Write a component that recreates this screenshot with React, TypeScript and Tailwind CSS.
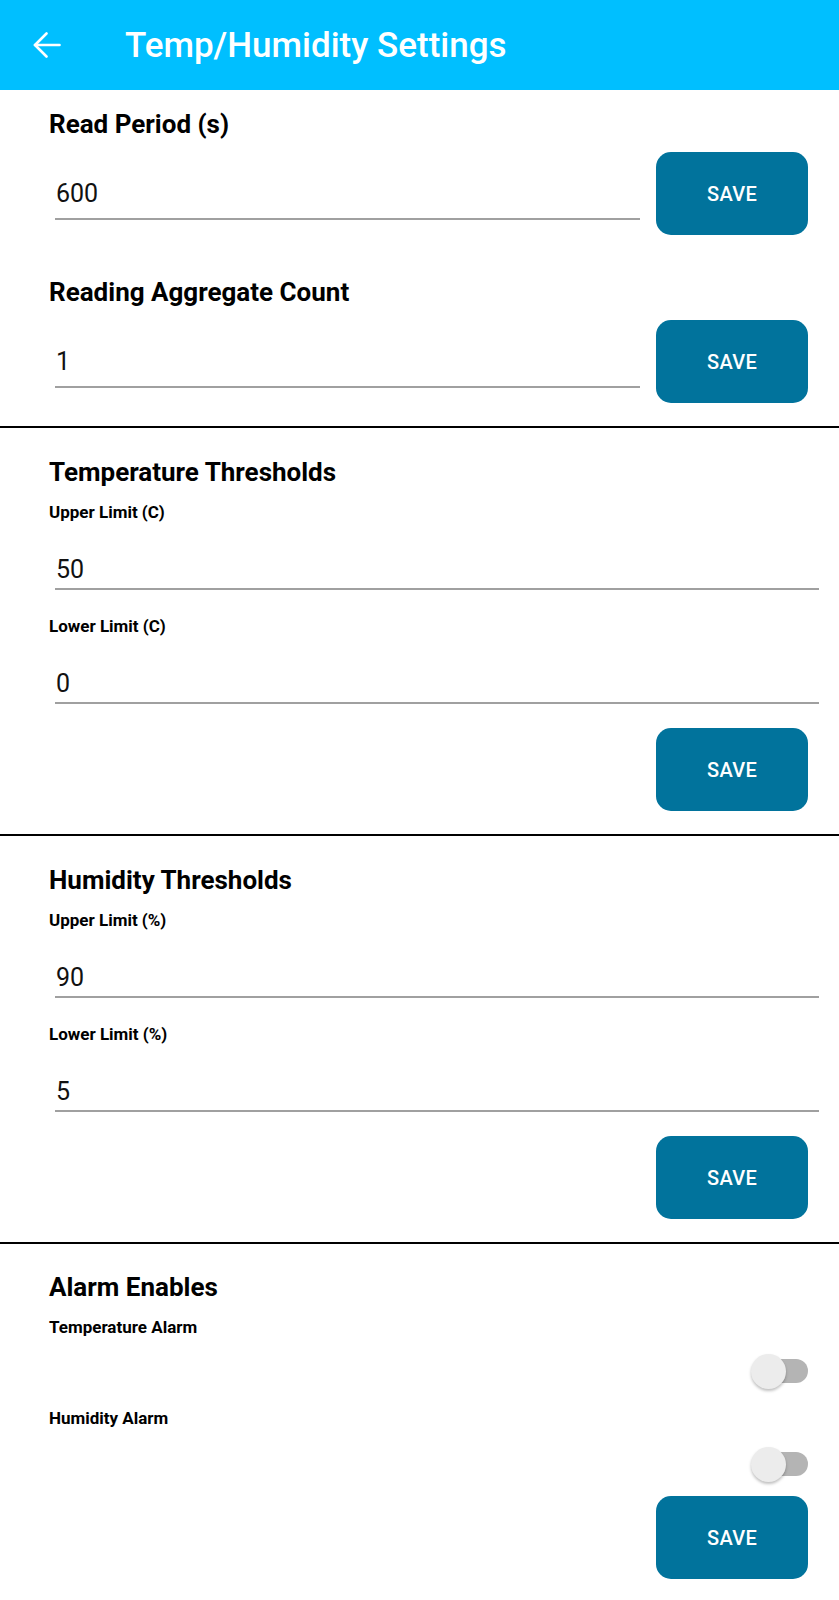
const font = "font-['Roboto','Liberation_Sans',sans-serif]";

function SaveButton({ className = "" }: { className?: string }) {
  return (
    <button
      className={`w-[152px] h-[83px] rounded-[15px] bg-[#01739c] text-white text-[20px] font-medium tracking-[0.3px] ${className}`}
    >
      SAVE
    </button>
  );
}

function Heading({ children, className = "" }: { children: string; className?: string }) {
  return (
    <h2 className={`pl-[49px] text-[26px] leading-[28px] font-bold text-black ${className}`}>{children}</h2>
  );
}

function Label({ children, className = "" }: { children: string; className?: string }) {
  return (
    <div className={`pl-[49px] text-[17px] leading-[18px] font-bold text-black ${className}`}>{children}</div>
  );
}

function Field({ value, className = "" }: { value: string; className?: string }) {
  return (
    <div className={`ml-[55px] mr-[20px] border-b-2 border-[#a0a0a0] pl-[1px] pb-[4px] text-[25px] leading-[28px] text-[#111] ${className}`}>
      {value}
    </div>
  );
}

function Toggle({ className = "" }: { className?: string }) {
  return (
    <div className={`flex justify-end pr-[31px] ${className}`}>
      <div className="relative w-[57px] h-[35px]">
        <div className="absolute right-0 top-[5px] w-[44px] h-[24px] rounded-full bg-[#b4b4b4]" />
        <div className="absolute left-0 top-0 w-[35px] h-[35px] rounded-full bg-[#ececec] shadow-[0_2px_3px_rgba(0,0,0,0.25)]" />
      </div>
    </div>
  );
}

function Divider() {
  return <div className="h-[2px] bg-black" />;
}

function SettingRow({ title, value, className = "" }: { title: string; value: string; className?: string }) {
  return (
    <div className={className}>
      <Heading>{title}</Heading>
      <div className="mt-[14px] flex items-center gap-[16px] pl-[55px] pr-[31px]">
        <div className="flex-1 h-[53px] flex items-center border-b-2 border-[#a0a0a0] pl-[1px] pt-[2px] text-[25px] leading-[28px] text-[#111]">
          {value}
        </div>
        <SaveButton />
      </div>
    </div>
  );
}

function Thresholds({ title, unit, upper, lower }: { title: string; unit: string; upper: string; lower: string }) {
  return (
    <div className="pb-[23px]">
      <Heading className="mt-[30px]">{title}</Heading>
      <Label className="mt-[17px]">{`Upper Limit (${unit})`}</Label>
      <Field className="mt-[35px]" value={upper} />
      <Label className="mt-[27px]">{`Lower Limit (${unit})`}</Label>
      <Field className="mt-[35px]" value={lower} />
      <div className="mt-[24px] flex justify-end pr-[31px]">
        <SaveButton />
      </div>
    </div>
  );
}

export default function App() {
  return (
    <div className={`w-[839px] min-h-[1600px] bg-white ${font}`}>
      <header className="h-[90px] bg-[#00bfff] flex items-center">
        <svg className="ml-[33px]" width="28" height="26" viewBox="0 0 28 26" fill="none" stroke="white" strokeWidth="2.6" strokeLinecap="round" strokeLinejoin="round">
          <path d="M26.5 13H2" />
          <path d="M13.5 1.5L2 13l11.5 11.5" />
        </svg>
        <h1 className="ml-[64px] text-white text-[35px] font-medium leading-none">Temp/Humidity Settings</h1>
      </header>

      <SettingRow className="pt-[20px]" title="Read Period (s)" value="600" />
      <SettingRow className="mt-[43px]" title="Reading Aggregate Count" value="1" />
      <div className="mt-[23px]">
        <Divider />
      </div>

      <Thresholds title="Temperature Thresholds" unit="C" upper="50" lower="0" />
      <Divider />
      <Thresholds title="Humidity Thresholds" unit="%" upper="90" lower="5" />
      <Divider />

      <div>
        <Heading className="mt-[29px]">Alarm Enables</Heading>
        <Label className="mt-[17px]">Temperature Alarm</Label>
        <Toggle className="mt-[18px]" />
        <Label className="mt-[20px]">Humidity Alarm</Label>
        <Toggle className="mt-[20px]" />
        <div className="mt-[14px] flex justify-end pr-[31px]">
          <SaveButton />
        </div>
      </div>
    </div>
  );
}
